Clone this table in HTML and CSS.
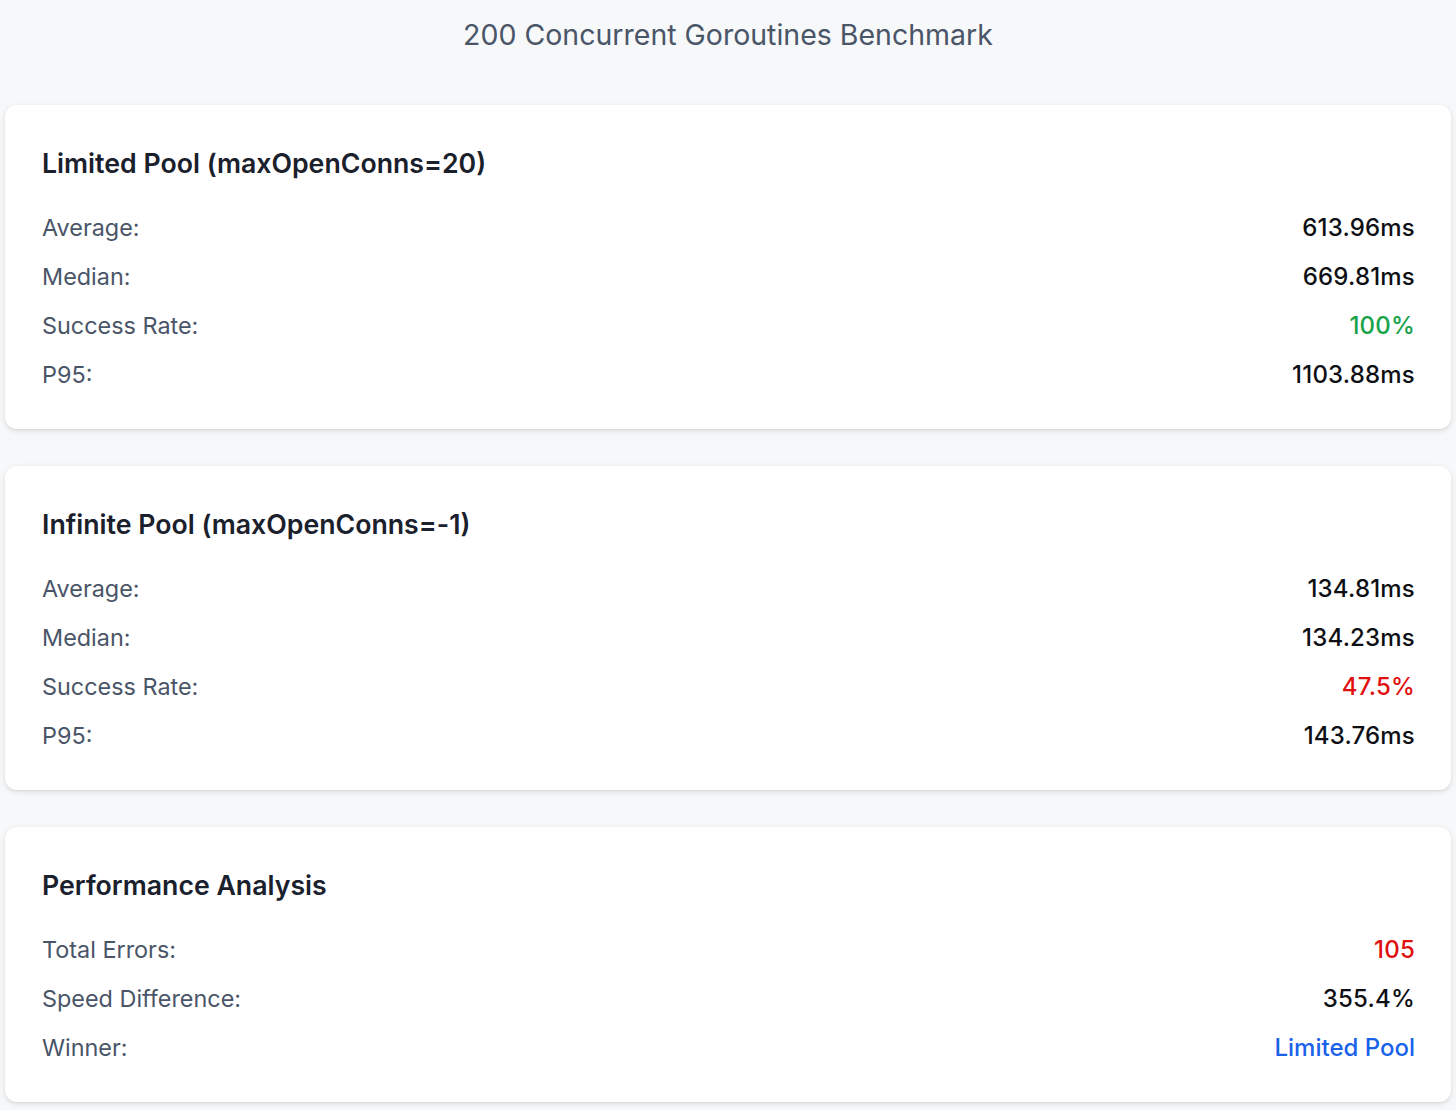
FILE: index.html
```html
<!DOCTYPE html>
<html lang="en">
<head>
<meta charset="utf-8">
<title>200 Concurrent Goroutines Benchmark</title>
<link rel="stylesheet" href="styles.css">
</head>
<body>
<main class="page">
  <h2 class="subtitle">200 Concurrent Goroutines Benchmark</h2>

  <section class="card">
    <h3 class="card-title">Limited Pool (maxOpenConns=20)</h3>
    <div class="row"><span class="label">Average:</span><span class="value">613.96ms</span></div>
    <div class="row"><span class="label">Median:</span><span class="value">669.81ms</span></div>
    <div class="row"><span class="label">Success Rate:</span><span class="value good">100%</span></div>
    <div class="row"><span class="label">P95:</span><span class="value">1103.88ms</span></div>
  </section>

  <section class="card">
    <h3 class="card-title">Infinite Pool (maxOpenConns=-1)</h3>
    <div class="row"><span class="label">Average:</span><span class="value">134.81ms</span></div>
    <div class="row"><span class="label">Median:</span><span class="value">134.23ms</span></div>
    <div class="row"><span class="label">Success Rate:</span><span class="value bad">47.5%</span></div>
    <div class="row"><span class="label">P95:</span><span class="value">143.76ms</span></div>
  </section>

  <section class="card">
    <h3 class="card-title">Performance Analysis</h3>
    <div class="row"><span class="label">Total Errors:</span><span class="value bad">105</span></div>
    <div class="row"><span class="label">Speed Difference:</span><span class="value">355.4%</span></div>
    <div class="row"><span class="label">Winner:</span><span class="value win">Limited Pool</span></div>
  </section>
</main>
</body>
</html>
```

FILE: styles.css
```css
* { box-sizing: border-box; }

html, body {
  margin: 0;
  padding: 0;
  background: #f7f8fa;
  font-family: Inter, "Noto Sans", "Liberation Sans", sans-serif;
}

.page {
  padding: 0 5px 8px;
  display: flex;
  flex-direction: column;
  gap: 37px;
}

.subtitle {
  margin: 0;
  padding-top: 15px;
  height: 68px;
  text-align: center;
  font-size: 28.5px;
  line-height: 40px;
  font-weight: 400;
  color: #4a5568;
}

.card {
  background: #ffffff;
  border-radius: 12px;
  box-shadow: 0 2px 6px rgba(0, 0, 0, 0.10), 0 1px 2px rgba(0, 0, 0, 0.06);
  padding: 38px 36px 30px 37px;
}

.card-title {
  margin: 0 0 20px;
  font-size: 26.7px;
  line-height: 40px;
  height: 40px;
  font-weight: 600;
  color: #1a202c;
}

.row {
  display: flex;
  justify-content: space-between;
  align-items: baseline;
  height: 49px;
  line-height: 49px;
  font-size: 24px;
}

.label {
  color: #4a5568;
  font-weight: 400;
  font-size: 23.4px;
}

.value {
  color: #0d0f14;
  font-weight: 500;
  letter-spacing: 0.2px;
}

.value.good { color: #16a34a; }
.value.bad { color: #e01010; }
.value.win { color: #1a62ea; letter-spacing: 0; }
```
